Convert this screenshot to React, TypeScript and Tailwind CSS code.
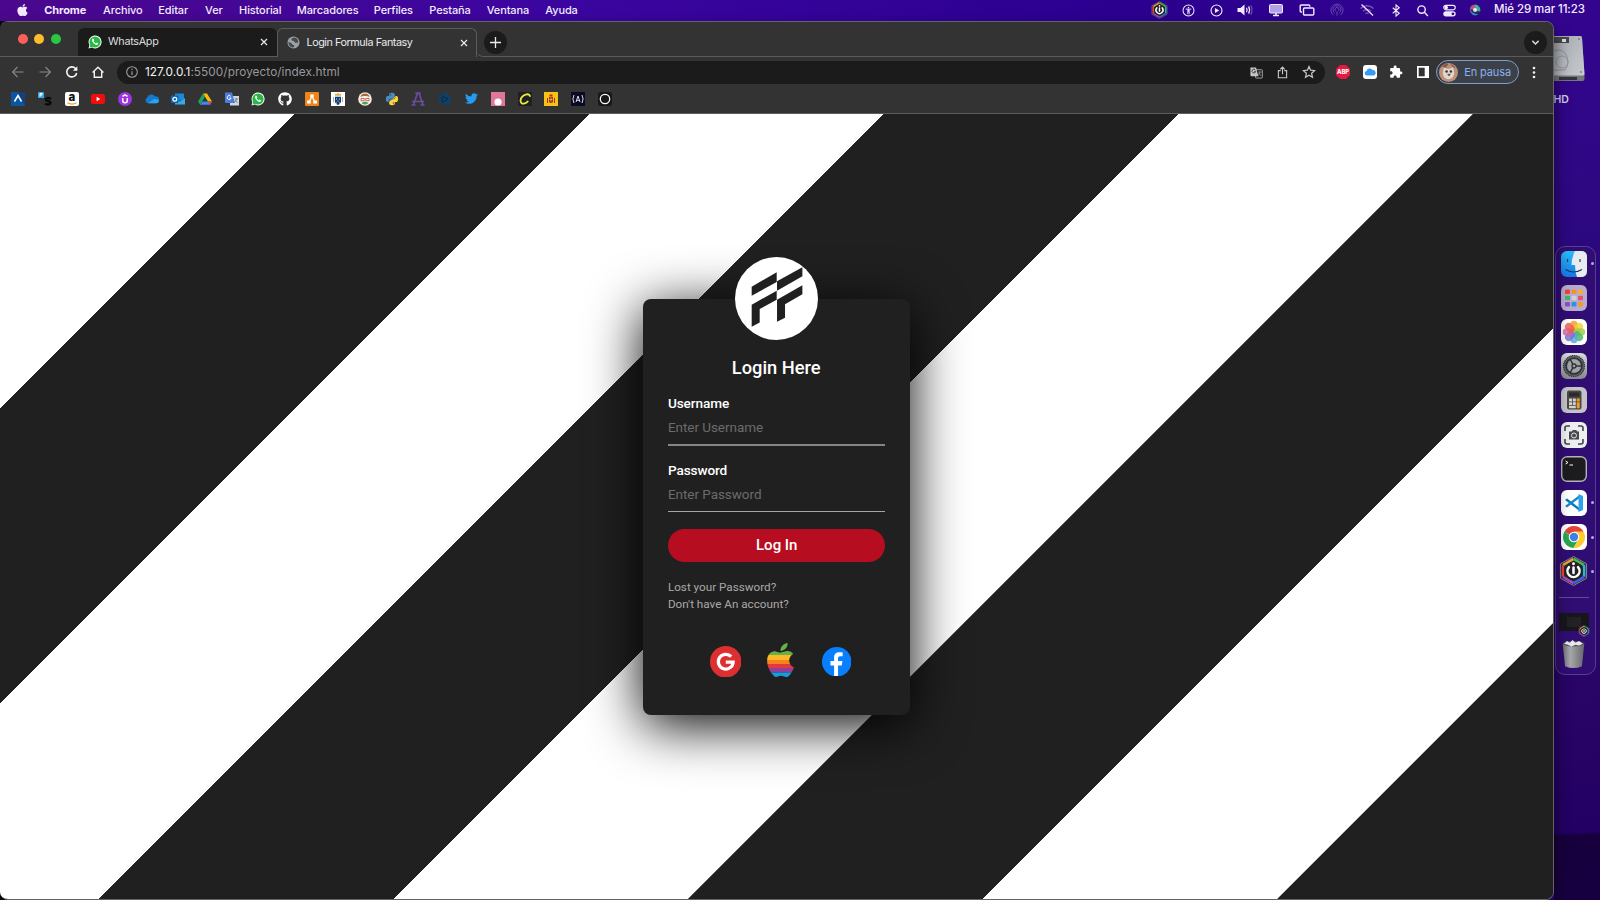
import React from "react";
import { FaApple, FaGithub, FaPython, FaTwitter } from "react-icons/fa";
import { MdExtension } from "react-icons/md";

const Gear = () => (
  <svg viewBox="0 0 26 26" className="h-[26px] w-[26px]">
    <defs>
      <linearGradient id="gearBg" x2="0" y2="1"><stop stopColor="#dadce0" /><stop offset="1" stopColor="#85878c" /></linearGradient>
    </defs>
    <rect width="26" height="26" rx="6" fill="url(#gearBg)" />
    <circle cx="13" cy="13" r="10.6" fill="#65686d" />
    <circle cx="13" cy="13" r="10.4" fill="none" stroke="#2c2e31" strokeWidth="1.4" strokeDasharray="1 .8" />
    <circle cx="13" cy="13" r="8" fill="none" stroke="#2f3135" strokeWidth="1.6" />
    <circle cx="13" cy="13" r="6.8" fill="#a0a4a9" />
    <circle cx="13" cy="13" r="2" fill="#a0a4a9" stroke="#303236" strokeWidth="1.3" />
    <path d="M15 13h6M12 11.3 9 6M12 14.7 9 20" stroke="#303236" strokeWidth="1.5" />
  </svg>
);

const Hex = ({ className }: { className: string }) => (
  <svg viewBox="0 0 30 32" className={className}>
    <path d="M15 1 28.5 8.5v15L15 31 1.500 23.500v-15z" fill="#28272b" stroke="#8c8996" strokeWidth="1" strokeLinejoin="round" />
    <path d="M4 10 15 3.500" stroke="#e9a03c" strokeWidth="2.600" />
    <path d="m15 3.500 11 6.500" stroke="#49b64e" strokeWidth="2.600" />
    <path d="M26 10v12" stroke="#2bb3d8" strokeWidth="2.600" />
    <path d="m26 22-11 6.500" stroke="#3c62dd" strokeWidth="2.600" />
    <path d="M15 28.500 4 22" stroke="#a746d0" strokeWidth="2.600" />
    <path d="M4 22V10" stroke="#e8433c" strokeWidth="2.600" />
    <circle cx="15" cy="16" r="9.600" fill="#232226" />
    <path d="M10.300 12a6.200 6.200 0 1 0 9.400 0M15 12.500v5.500" fill="none" stroke="#fff" strokeWidth="2.600" strokeLinecap="round" />
    <circle cx="15" cy="8.500" r="1.500" fill="#fff" />
  </svg>
);

const menus: [string, string][] = [
  ["Archivo", "w-[55.2px]"],
  ["Editar", "w-[46.8px]"],
  ["Ver", "w-[34px]"],
  ["Historial", "w-[57.700px]"],
  ["Marcadores", "w-[77px]"],
  ["Perfiles", "w-[55.500px]"],
  ["Pestaña", "w-[57.500px]"],
  ["Ventana", "w-[58.500px]"],
  ["Ayuda", "w-[40px]"],
];

const Cell = ({ w, children }: { w: string; children: React.ReactNode }) => (
  <div className={`flex shrink-0 items-center justify-center ${w}`}>{children}</div>
);

const MenuBar = () => (
  <div className="flex h-[21px] shrink-0 items-center pb-px text-[11px] font-medium tracking-[-0.12px] text-[#f3ecff]">
    <div className="w-[44.300px] pl-[15.500px]"><FaApple className="h-[14px] w-[13px]" /></div>
    <div className="w-[58.800px] font-bold">Chrome</div>
    {menus.map(([t, w]) => <div key={t} className={`shrink-0 whitespace-nowrap ${w}`}>{t}</div>)}
    <div className="ml-auto flex h-full items-center">
      <Cell w="w-[29px]"><Hex className="h-[18px] w-[17px]" /></Cell>
      <Cell w="w-[29px]">
        <svg viewBox="0 0 14 14" className="h-[13px] w-[13px]" fill="none" stroke="currentColor"><circle cx="7" cy="7" r="5.900" strokeWidth="1.100" /><circle cx="7" cy="3.800" r=".8" fill="currentColor" stroke="none" /><path d="M4 5.500h6M7 5.500v3M6.300 6v5M7.700 6v5" strokeWidth="1" /></svg>
      </Cell>
      <Cell w="w-[28px]">
        <svg viewBox="0 0 14 14" className="h-[13px] w-[13px]"><circle cx="7" cy="7" r="5.900" fill="none" stroke="currentColor" strokeWidth="1.200" /><path d="m5.300 4.200 4.700 2.800-4.700 2.800z" fill="currentColor" /></svg>
      </Cell>
      <Cell w="w-[30px]">
        <svg viewBox="0 0 17 14" className="h-[14px] w-[17px]" fill="none" stroke="currentColor"><path d="M.5 5h3l4-3.500v11L3.500 9h-3z" fill="currentColor" stroke="none" /><path d="M9.500 4.800q1.200 2.200 0 4.400M11.600 3.400q2 3.600 0 7.200" strokeWidth="1.200" /><path d="M13.700 2.200q2.700 4.800 0 9.600" strokeWidth="1.100" opacity=".35" /></svg>
      </Cell>
      <Cell w="w-[31.500px]">
        <svg viewBox="0 0 16 14" className="h-[14px] w-[16px]"><rect x="1.500" y="1.500" width="13" height="8.500" rx="1" fill="#b3a2e6" stroke="currentColor" /><path d="M5 12.500h6M8 10v2" stroke="currentColor" strokeWidth="1.500" /></svg>
      </Cell>
      <Cell w="w-[30px]">
        <svg viewBox="0 0 16 14" className="h-[14px] w-[16px]" fill="none" stroke="currentColor" strokeWidth="1.400"><path d="M3 9H2.200Q1.200 9 1.200 8V3Q1.200 2 2.200 2h7.600q1 0 1 1v.8" /><rect x="4.500" y="5" width="10.300" height="7" rx="1" /></svg>
      </Cell>
      <Cell w="w-[30px]">
        <svg viewBox="0 0 14 14" className="h-[14px] w-[14px] opacity-30" fill="none" stroke="currentColor"><path d="M3.500 12A6 6 0 1 1 10.500 12M4.600 9.800a3.900 3.900 0 1 1 4.800 0" /><path d="M5.700 7.800a1.900 1.900 0 1 1 2.600 0M7 8.500v4" /></svg>
      </Cell>
      <Cell w="w-[30px]">
        <svg viewBox="0 0 16 14" className="h-[14px] w-[16px]" fill="none" stroke="currentColor"><path d="M1.500 5.500a9 9 0 0 1 13 0M4 8.200a5.400 5.400 0 0 1 8 0M6.500 10.700a2.300 2.300 0 0 1 3 0" opacity=".35" strokeWidth="1.400" /><path d="m2.500 1.500 11.500 11" strokeWidth="1.200" /></svg>
      </Cell>
      <Cell w="w-[27px]">
        <svg viewBox="0 0 10 14" className="h-[13px] w-[10px]" fill="none" stroke="currentColor" strokeWidth="1.200"><path d="m1.500 4 7 6L5 13V1l3.500 3-7 6" /></svg>
      </Cell>
      <Cell w="w-[27px]">
        <svg viewBox="0 0 14 14" className="h-[13px] w-[13px]" fill="none" stroke="currentColor" strokeWidth="1.500"><circle cx="6" cy="6" r="4" /><path d="m9 9 3.800 3.800" /></svg>
      </Cell>
      <Cell w="w-[26px]">
        <svg viewBox="0 0 14 14" className="h-[13px] w-[13px]"><rect x=".8" y="1.500" width="12.400" height="4.800" rx="2.400" fill="none" stroke="currentColor" strokeWidth="1.200" /><circle cx="3.500" cy="3.900" r="1.900" fill="currentColor" /><rect x=".3" y="7.700" width="13.400" height="5.800" rx="2.900" fill="currentColor" /><circle cx="10.700" cy="10.600" r="1.500" fill="#34078f" /></svg>
      </Cell>
      <Cell w="w-[26px]">
        <svg viewBox="0 0 14 14" className="h-[12px] w-[12px]"><circle cx="7" cy="7" r="6.500" fill="#2c2b57" /><path d="M1 6a6.500 6.500 0 0 1 6-5.500Q10 3 7 7z" fill="#c34a8c" /><path d="M1 6q3 6 10 6A6.500 6.500 0 0 1 1 6" fill="#3d8be8" /><path d="M7 .5a6.500 6.500 0 0 1 6 8Q9 9 7 7z" fill="#3fae9d" /><circle cx="7" cy="7" r="2.300" fill="#fff" opacity=".85" /></svg>
      </Cell>
      <div className="w-[112px] whitespace-nowrap pl-[6px] text-[11.500px] tracking-[-0.08px]">Mié 29 mar 11:23</div>
    </div>
  </div>
);

const Close = () => (
  <svg viewBox="0 0 8 8" className="h-[8px] w-[8px]" stroke="#e8eaed" strokeWidth="1.200"><path d="m1 1 6 6M7 1 1 7" /></svg>
);

const WhatsAppIcon = () => (
  <svg viewBox="0 0 14 14" className="h-[14px] w-[14px]">
    <path d="M.5 13.500 1.400 10A6.500 6.500 0 1 1 4 12.600z" fill="#fff" />
    <circle cx="7" cy="7" r="5.600" fill="#27b946" /><path d="m1.600 12.400 1-3.500 2.400 2.500z" fill="#27b946" />
    <path d="M4.500 3.800q-1 1 0 2.900 1.500 2.400 3.600 3.200 1.700.3 2.200-1.400L8.800 7.600l-.9.800Q6.500 7.800 5.700 6.300l.6-.8-.7-1.700z" fill="#fff" />
  </svg>
);

const TabStrip = () => (
  <div className="flex h-[35px] shrink-0 items-stretch bg-[#333333]">
    <div className="flex w-[77.500px] items-center gap-[6.600px] border-b border-[#5a5c5b] pl-[17.500px]">
      <i className="h-[10px] w-[10px] rounded-full bg-[#ff5f57]" />
      <i className="h-[10px] w-[10px] rounded-full bg-[#febc2e]" />
      <i className="h-[10px] w-[10px] rounded-full bg-[#28c840]" />
    </div>
    <div className="mt-[6px] flex w-[199.500px] items-center rounded-t-[6px] border-b border-[#5a5c5b] bg-[#1b1b1b] pl-[10px] text-[10.800px] text-[#dcdedf]">
      <WhatsAppIcon />
      <span className="ml-[6.500px] pt-px tracking-[-0.3px]">WhatsApp</span>
      <span className="ml-auto mr-[9px]"><Close /></span>
    </div>
    <div className="mt-[6px] flex w-[200px] items-center rounded-t-[6px] border-x border-t border-[#5a5c5b] pb-px pl-[9px] text-[10.800px] text-[#e8eaed]">
      <svg viewBox="0 0 14 14" className="h-[13px] w-[13px]"><circle cx="7" cy="7" r="6.500" fill="#9aa0a6" /><path d="M7.500 1.500 4.500 3 5.500 5l2 .5L9 7.500l3-.5a5 5 0 0 0-3-5zM1.500 6.500l3 1 1.500 2L8 10l-1 2.500A5.500 5.500 0 0 1 1.500 6.500" fill="#46494d" /></svg>
      <span className="ml-[6.500px] whitespace-nowrap pt-px tracking-[-0.45px]">Login Formula Fantasy</span>
      <span className="ml-auto mr-[8.500px]"><Close /></span>
    </div>
    <div className="flex flex-1 items-center rounded-bl-[6px] border-b border-[#5a5c5b] pl-[6.500px] pr-[6px] pt-[7px]">
      <div className="flex h-[23px] w-[23px] items-center justify-center rounded-full bg-[#1b1b1b]">
        <svg viewBox="0 0 10 10" className="h-[11px] w-[11px]" stroke="#e8eaed" strokeWidth="1.200"><path d="M5 0v10M0 5h10" /></svg>
      </div>
      <div className="ml-auto flex h-[23px] w-[23px] items-center justify-center rounded-full bg-[#1b1b1b]">
        <svg viewBox="0 0 10 10" className="h-[9px] w-[9px]" fill="none" stroke="#d5d7d9" strokeWidth="1.600"><path d="m1.500 3.200 3.500 3.500 3.500-3.500" /></svg>
      </div>
    </div>
  </div>
);

const TranslateGray = () => (
  <svg viewBox="0 0 14 14" className="h-[13px] w-[13px]"><rect x="6" y="4" width="7.300" height="9" rx=".6" fill="none" stroke="#a4a6a8" /><path d="M.5 1.500h6L9 11H1.500q-1 0-1-1z" fill="#c3c5c7" /><path d="M5.800 4.300a2 2 0 1 0 .3 1.700H4.500" fill="none" stroke="#26282a" strokeWidth=".9" /><path d="M9 6.500h3.500M10.700 6v1q-.4 2-2 3M9.300 8q1.200 1.700 2.800 2.300" fill="none" stroke="#a4a6a8" strokeWidth=".8" /></svg>
);

const Toolbar = () => (
  <div className="flex h-[30px] shrink-0 items-center bg-[#333333] pl-[4.500px]">
    <Cell w="w-[27px]"><svg viewBox="0 0 12 12" className="h-[12px] w-[12px]" fill="none" stroke="#858789" strokeWidth="1.200"><path d="M11.500 6h-11M5.500 1l-5 5 5 5" /></svg></Cell>
    <Cell w="w-[27px]"><svg viewBox="0 0 12 12" className="h-[12px] w-[12px]" fill="none" stroke="#858789" strokeWidth="1.200"><path d="M.5 6h11M6.500 1l5 5-5 5" /></svg></Cell>
    <Cell w="w-[26.500px]"><svg viewBox="0 0 12 12" className="h-[12px] w-[12px]" fill="none" stroke="#f1f3f4" strokeWidth="1.600"><path d="M10.700 7A5 5 0 1 1 9.500 2.500L11 4" /><path d="M11.300.3v4.500H6.800z" fill="#f1f3f4" stroke="none" /></svg></Cell>
    <Cell w="w-[26.500px]"><svg viewBox="0 0 12 12" className="h-[12px] w-[12px]" fill="none" stroke="#f1f3f4" strokeWidth="1.400"><path d="M.6 6.500 6 1.300l5.400 5.200M2.300 5.500v5.700h7.400V5.500" /></svg></Cell>
    <div className="ml-[5.500px] flex h-[23px] w-[1207.500px] items-center rounded-full bg-[#1b1b1b] pl-[9px]">
      <svg viewBox="0 0 12 12" className="h-[12px] w-[12px]" fill="none" stroke="#9a9da0"><circle cx="6" cy="6" r="5.300" strokeWidth="1.100" /><path d="M6 5.200V9M6 2.800v1.300" strokeWidth="1.200" /></svg>
      <span className="ml-[7px] pt-px text-[11.800px] tracking-[0.060px] text-[#97999b]"><span className="text-[#f1f3f4]">127.0.0.1</span>:5500/proyecto/index.html</span>
      <div className="ml-auto mr-[2px] flex">
        <Cell w="w-[26.500px]"><TranslateGray /></Cell>
        <Cell w="w-[26.500px]"><svg viewBox="0 0 12 14" className="h-[13px] w-[11px]" fill="none" stroke="#c6c8ca" strokeWidth="1.200"><path d="M4 5H1.500v7.800h9V5H8M6 9V1.200M3.500 3.500 6 1l2.500 2.500" /></svg></Cell>
        <Cell w="w-[26.500px]"><svg viewBox="0 0 14 14" className="h-[14px] w-[14px]" fill="none" stroke="#c6c8ca" strokeWidth="1.200"><path d="m7 1.500 1.600 3.700 4 .4-3 2.700.9 4L7 10.200l-3.500 2.100.9-4-3-2.700 4-.4z" /></svg></Cell>
      </div>
    </div>
    <div className="flex pl-[5px]">
      <Cell w="w-[26.700px]">
        <svg viewBox="0 0 14 14" className="h-[14px] w-[14px]"><path d="M4 0h6l4 4v6l-4 4H4l-4-4V4z" fill="#e6193f" /><text x="7" y="9" textAnchor="middle" fontSize="5.800" fontWeight="800" fill="#fff" fontFamily="Inter, sans-serif">ABP</text></svg>
      </Cell>
      <Cell w="w-[26.700px]">
        <svg viewBox="0 0 14 14" className="h-[14px] w-[14px]"><rect width="14" height="14" rx="3" fill="#fff" /><path d="M3.500 10.500a2.300 2.300 0 0 1 0-4.500 3.300 3.300 0 0 1 6-1 2.800 2.800 0 0 1 1 5.500z" fill="#369bf4" /></svg>
      </Cell>
      <Cell w="w-[26.700px]"><MdExtension className="h-[14px] w-[14px] text-white" /></Cell>
      <Cell w="w-[26.700px]"><svg viewBox="0 0 12 12" className="h-[12px] w-[12px]"><rect width="12" height="12" fill="#fff" /><rect x="1.700" y="1.700" width="6" height="8.600" fill="#333" /></svg></Cell>
    </div>
    <div className="flex h-[23.500px] w-[83px] shrink-0 items-center rounded-full border border-[#7d9fcd] bg-[#3c4048] pl-[1.500px] text-[11px] text-[#8ab0f0]">
      <svg viewBox="0 0 20 20" className="h-[19px] w-[19px]"><circle cx="10" cy="10" r="10" fill="#c09176" /><path d="m5 4 3 2h4l3-2 1 7q-1 6-6 6t-6-6z" fill="#ded8d0" /><circle cx="8" cy="9" r="1.300" fill="#37322f" /><circle cx="12.500" cy="9" r="1.300" fill="#37322f" /><path d="m8.500 12 2-1 2 1-2 2z" fill="#6f5148" /><path d="M3 4q3-4 7-3l-3 4zM12 1q4 1 5 5l-3-2z" fill="#805a48" /></svg>
      <span className="ml-[6.500px] whitespace-nowrap pt-px tracking-[-0.12px]">En pausa</span>
    </div>
    <svg viewBox="0 0 4 14" className="ml-[13px] h-[13px] w-[4px]" fill="#f1f3f4"><circle cx="2" cy="2.200" r="1.400" /><circle cx="2" cy="7" r="1.400" /><circle cx="2" cy="11.800" r="1.400" /></svg>
  </div>
);

const Svg = ({ children }: { children: React.ReactNode }) => <svg viewBox="0 0 14 14" className="h-[14px] w-[14px] overflow-visible">{children}</svg>;

const bookmarks: React.ReactNode[] = [
  <Svg><path d="M0 0h14v14H0z" fill="#0b559f" /><path d="M7 0h7v14z" fill="#15407d" /><path d="m3.500 9.500 3.500-6 3.500 6" fill="none" stroke="#fff" strokeWidth="1.600" /></Svg>,
  <Svg><rect width="6" height="6" rx=".5" fill="#3ba4e3" /><path d="M2 4.800V1.500h2v1.500H2" fill="none" stroke="#fff" /><path d="M13 6.700q-5-1.800-5.200.8c0 2.500 4.900.8 4.700 3.300-.2 2-4 2-5.500.8" fill="none" stroke="#080808" strokeWidth="2.200" /></Svg>,
  <Svg><rect width="14" height="14" rx="2" fill="#fff" /><text x="7" y="9.300" textAnchor="middle" fontSize="11.500" fontWeight="800" fill="#111" fontFamily="Inter, sans-serif">a</text><path d="M2.500 10.800q4.500 2.600 9 0" fill="none" stroke="#f49a1c" strokeWidth="1.200" /></Svg>,
  <Svg><rect y="2" width="14" height="10" rx="2.500" fill="#f40c0c" /><path d="m5.600 4.800 3.800 2.200-3.800 2.200z" fill="#fff" /></Svg>,
  <Svg><circle cx="7" cy="7" r="7" fill="#a033e0" /><path d="M4.700 6v2.500q0 2.300 2.300 2.300t2.300-2.300V6M4.500 4.400 7 2.800l2.500 1.600" fill="none" stroke="#fff" strokeWidth="1.500" /></Svg>,
  <Svg><path d="M3 11.200a3 3 0 0 1-.8-5.600A4.300 4.300 0 0 1 10 4.500a3.400 3.400 0 0 1 1.500 6.700z" fill="#1479cf" /><path d="M3 11.200 9 7q4.500 0 5 2-.4 2.200-2.500 2.200z" fill="#28a8ea" /></Svg>,
  <Svg><path d="M4 1.500h9v7H4z" fill="#1b88d8" /><path d="M4 6l5 3.500L14 6v6.500H4z" fill="#39a9e9" /><rect y="3.500" width="7.500" height="7.500" rx=".7" fill="#0b68b7" /><circle cx="3.800" cy="7.200" r="1.900" fill="none" stroke="#fff" strokeWidth="1.200" /></Svg>,
  <Svg><path d="M5 1.500h4l5 8h-4z" fill="#fbbc04" /><path d="m5 1.500 2 3.300-5 8-2-3.300z" fill="#1da462" /><path d="M4.500 9.500H14l-2 3.300H2z" fill="#4285f4" /><path d="M10 9.500h4l-2 3.300z" fill="#ea4335" /></Svg>,
  <Svg><rect x="5" y="4" width="9" height="9.500" fill="#d4d7da" /><path d="M0 .5h7L10 11H1q-1 0-1-1z" fill="#4a7ddd" /><path d="M5.600 4.200a2 2 0 1 0 .5 1.800H4.400" fill="none" stroke="#fff" /><path d="M9.700 7h3.500M11.500 6v1q-.5 2-1.800 3M10 8l2.800 3" fill="none" stroke="#6c7782" strokeWidth=".8" /></Svg>,
  <WhatsAppIcon />,
  <FaGithub className="h-[14px] w-[14px] text-white" />,
  <Svg><rect width="14" height="14" rx="1" fill="#ef8518" /><path d="M7 4.500 4 10m3-5.500 3 5.500" stroke="#fff" strokeWidth="1.300" /><path d="M5.200 2.500h3.600v2.800H5.200zM2 8.500h3.700v3H2zM8.300 8.500H12v3H8.300z" fill="#fff" /></Svg>,
  <Svg><path d="M0 0h14v14H0z" fill="#fff" /><path d="M4 4.800h6V10q-1 2.500-3 3-2-.5-3-3z" fill="#153d75" /><path d="M4.300 3.800 3.500 1.500l2 .7L7 .7l1.500 1.500 2-.7-.8 2.300z" fill="#e4aa4a" /><path d="M5 7h1M8 7h1M6.500 9h1M5 11h1M8 11h1" stroke="#dfe6ef" /><path d="M2.500 5v5M11.500 5v5" stroke="#a8aaa6" /></Svg>,
  <Svg><circle cx="7" cy="7" r="6.800" fill="#f4ede4" /><path d="M2.500 5Q3 1.500 7 1.500T11.500 5l-2.500-1h-4z" fill="#a66b39" /><path d="M3 6.500h3.200v2.200H3zM7.800 6.500H11v2.200H7.800z" fill="#fff" stroke="#ba4432" strokeWidth=".8" /><path d="M3.500 11q3.500-2.500 7 0-3.500 3-7 0" fill="#46a25d" /></Svg>,
  <div className="h-[14px] w-[14px]">
    <svg className="absolute h-0 w-0"><defs><linearGradient id="py" x1="0" y1="0" x2="1" y2="1"><stop offset=".5" stopColor="#4b8bbe" /><stop offset=".5" stopColor="#ffd43b" /></linearGradient></defs></svg>
    <FaPython className="h-[14px] w-[14px]" fill="url(#py)" />
  </div>,
  <Svg><path d="M4.300 1h5.400M8 1l4 12M6.500 1 2.500 13M1 9.500h12M.5 13h4M9.500 13h4" fill="none" stroke="#6a4d9e" strokeWidth="1.700" /></Svg>,
  <Svg><path d="m7 .5 6 3.300v6.400L7 13.500 1 10.200V3.800z" fill="#123f63" /><path d="m4 4 6 3-6 3.500M4 5v5" fill="none" stroke="#082943" /></Svg>,
  <FaTwitter className="h-[13px] w-[13px] text-[#259cf0]" />,
  <Svg><path d="M0 0h14v14H0z" fill="#df7896" /><circle cx="7" cy="10" r="3.600" fill="#fff" /></Svg>,
  <Svg><path d="M0 0h14v14H0z" fill="#20211c" /><path d="M12 4.800Q12 2 8.500 2.300 3 3.500 2.500 8.500q.2 3.500 3.500 3.200 2.500-.5 4.200-2.700" fill="none" stroke="#ece94c" strokeWidth="1.800" /></Svg>,
  <Svg><path d="M0 0h14v14H0z" fill="#f4c313" /><path d="M5 5h4v5q-2 2-4 0zM5.500 2.500h3L8.500 4.500h-3zM3 6h1v5H3zM10 6h1v5h-1z" fill="#a92d20" /><path d="M5.500 7.500h3M7 5.500v4" stroke="#e6c78a" strokeWidth=".7" /></Svg>,
  <Svg><path d="M0 0h14v14H0z" fill="#0a0a23" /><path d="M3 3Q.8 7 3 11M11 3q2.200 4 0 8M5 10l2-6 2 6M5.800 8.300h2.400" fill="none" stroke="#d9d9ea" strokeWidth="1" /></Svg>,
  <Svg><rect width="14" height="14" rx="3" fill="#171717" /><circle cx="7" cy="7" r="4.700" fill="none" stroke="#fff" strokeWidth="1.300" /></Svg>,
];

const BookmarksBar = () => (
  <div className="flex h-[27px] shrink-0 items-center border-b border-[#5c5d5d] bg-[#333333] pb-[3px] pl-[5px]">
    {bookmarks.map((b, i) => <Cell key={i} w="w-[26.670px]">{b}</Cell>)}
  </div>
);

const Field = ({ label, hint, type, line }: { label: string; hint: string; type: string; line: string }) => (
  <label className="block">
    <span className="block h-[17px] text-[13.600px] font-medium leading-[17px] tracking-[-0.1px] text-white">{label}</span>
    <input type={type} placeholder={hint} className={`block w-full bg-transparent pb-[2px] text-[13.500px] tracking-[-0.05px] text-white outline-none placeholder:text-[#6b6b6b] ${line}`} />
  </label>
);

const LoginCard = () => (
  <div className="relative mt-px flex h-[416.500px] w-[266.700px] flex-col rounded-[8px] bg-[#202020] px-[25px] pt-[59.500px] font-['Roboto',sans-serif] shadow-[0_10px_54px_#000]">
    <div className="absolute left-[91.700px] top-[-41.700px] h-[83.400px] w-[83.400px] rounded-full bg-white">
      <svg viewBox="0 0 250 250" className="h-full w-full" fill="#202020">
        <path d="M50 89 125 46v29L50 116zM126 73l76-42v27l-76 43zM50 143l75-42v27l-51 28v40l-24 13zM126 128l76-43v27l-52 30v40l-24 12z" />
      </svg>
    </div>
    <h1 className="h-[20px] text-center text-[18.300px] font-medium leading-[20px] text-white">Login Here</h1>
    <div className="mt-[17px] flex flex-col gap-[15.500px]">
      <Field label="Username" hint="Enter Username" type="text" line="h-[34px] border-b-2 border-[#858585]" />
      <Field label="Password" hint="Enter Password" type="password" line="h-[33.500px] border-b border-[#a5a5a5]" />
    </div>
    <button className="mt-[16.500px] h-[33.500px] shrink-0 rounded-full bg-[#b60d20] pl-px text-[15px] font-medium text-white">Log In</button>
    <div className="mt-[16.500px] flex flex-col text-[11.700px] leading-[17px] text-[#a9a9a9]">
      <a>Lost your Password?</a>
      <a>Don't have An account?</a>
    </div>
    <div className="mt-[29px] flex h-[36px] items-center pl-[42px]">
      <svg viewBox="0 0 32 32" className="mt-[3px] h-[31.500px] w-[31.500px]"><circle cx="16" cy="16" r="16" fill="#dc2f30" /><path d="M21.500 10.800A7.500 7.500 0 1 0 23.500 16.300H16" fill="none" stroke="#fff" strokeWidth="3.300" /></svg>
      <svg viewBox="0 0 27 34" className="ml-[26px] h-[34px] w-[27px]">
        <defs><clipPath id="apple"><path d="M14 9.500c2-.2 4-1.500 6.500-1.400 2.500 0 4.500 1.200 5.700 3-6 3.500-5 11 .8 13.400-1.200 3.500-3.500 7-5.700 9-1.500 1-3 .4-4.300-.1-2-.9-4-.8-6 .2-1.500.6-2.600.7-4-.6C.8 27.500-1.700 17.500 1.500 12 3.500 8.600 6.500 7.700 9 8.400c2 .6 3.600 1.300 5 1.100" /></clipPath></defs>
        <path d="M13.500 8C13 3.500 17 .5 20.500 0c.5 4-2.500 7.500-7 8" fill="#63b147" />
        <g clipPath="url(#apple)"><path d="M0 7h27v5H0z" fill="#63b147" /><path d="M0 12h27v5H0z" fill="#fdb827" /><path d="M0 17h27v4H0z" fill="#f5821f" /><path d="M0 21h27v4H0z" fill="#e03a3e" /><path d="M0 25h27v4.500H0z" fill="#963d97" /><path d="M0 29.500h27V34H0z" fill="#139ddb" /></g>
      </svg>
      <svg viewBox="0 0 30 30" className="ml-[27.500px] mt-[3px] h-[29.500px] w-[29.500px]"><circle cx="15" cy="15" r="15" fill="#087fff" /><path d="M12.300 29.700V18.700H8.600V14.200h3.700v-3.600c0-3.600 2.300-5.200 5.200-5.200 1.500 0 2.600.1 3.500.3V9.500h-2.300c-1.800 0-2.400.9-2.400 2.200v2.500h4.500l-.8 4.500h-3.700v11z" fill="#fff" /></svg>
    </div>
  </div>
);

const petals = ["#f49b2c", "#f4d22e", "#9bcc43", "#47b86b", "#53a8dd", "#7d6fc9", "#cf64aa", "#ef5b4c"];
const tiles = ["#ed4338", "#f5922b", "#f4ad35", "#47b55a", "#d0d0da", "#ea5068", "#914fc2", "#3390e3", "#f39b24"];
const D = ({ children }: { children: React.ReactNode }) => <svg viewBox="0 0 26 26" className="h-[26px] w-[26px]">{children}</svg>;

const dockIcons: { icon: React.ReactNode; dot?: boolean }[] = [
  { dot: true, icon: <D><defs><linearGradient id="fd" x2="0" y2="1"><stop stopColor="#29bdf9" /><stop offset="1" stopColor="#1479e8" /></linearGradient></defs><rect width="26" height="26" rx="6" fill="url(#fd)" /><path d="M14 0q-3.500 7-3.500 14H14q0 7 2 12h4q6 0 6-6V6q0-6-6-6z" fill="#e8ecf1" /><path d="M6.500 8v3M19 8v3M4.500 18.500q8 5 16.500 0" fill="none" stroke="#243954" strokeWidth="1.200" /></D> },
  { icon: <D><rect width="26" height="26" rx="6" fill="#b6acd2" />{tiles.map((c, i) => <rect key={i} x={4 + (i % 3) * 6.500} y={4.500 + Math.floor(i / 3) * 6.300} width="5" height="4.500" rx="1" fill={c} />)}</D> },
  { icon: <D><rect width="26" height="26" rx="6" fill="#fff" />{petals.map((c, i) => <rect key={i} x="9.300" y="1.800" width="7.400" height="10.800" rx="3.700" fill={c} opacity=".82" transform={`rotate(${i * 45} 13 13)`} />)}</D> },
  { icon: <Gear /> },
  { icon: <D><rect width="26" height="26" rx="6" fill="#c4c4c8" /><rect x="6" y="3.500" width="14.500" height="19" rx="2" fill="#4b4845" /><rect x="8" y="5.500" width="10.500" height="4" fill="#2c2b2a" /><path d="M8 11.500h3v3H8zM11.800 11.500h3v3h-3zM8 15.300h3v3H8zM11.800 15.300h3v3h-3zM8 19h6.800v2.300H8z" fill="#d4d3d0" /><path d="M15.700 11.500h3v3h-3zM15.700 15.300h3v6h-3z" fill="#f39c25" /></D> },
  { icon: <D><rect width="26" height="26" rx="6" fill="#eceef0" /><path d="M4 9V6q0-2 2-2h3M17 4h3q2 0 2 2v3M22 17v3q0 2-2 2h-3M9 22H6q-2 0-2-2v-3" fill="none" stroke="#404448" strokeWidth="1.600" /><path d="M8 9.500h2.500L12 8h3l1.500 1.500H18v8H8z" fill="#484c50" /><circle cx="13" cy="13.500" r="2.500" fill="#484c50" stroke="#dfe2e5" /></D> },
  { icon: <D><rect x=".7" y=".7" width="24.600" height="24.600" rx="5.500" fill="#1c1c1e" stroke="#b5b5b8" strokeWidth="1.400" /><path d="m4.500 5 2.500 1.500L4.500 8M8.500 9h3.500" fill="none" stroke="#fff" /></D> },
  { dot: true, icon: <D><rect width="26" height="26" rx="6" fill="#fff" /><path d="m4 10 2-1.500L18.500 18v3z" fill="#0877bb" /><path d="m4 16 2 1.500L18.500 8V5z" fill="#1687cf" /><path d="M17.500 4 22 6v14l-4.500 2z" fill="#2ca3ed" /></D> },
  { dot: true, icon: <D><rect width="26" height="26" rx="6" fill="#fff" /><path d="M13 13 3.500 7.500A11 11 0 0 1 22.500 7.500z" fill="#e44336" /><path d="M13 13h-1L3.500 7.500A11 11 0 0 0 12.500 24l5-8.500z" fill="#29a650" /><path d="M13 7.500h9.500A11 11 0 0 1 12.500 24l5-8.500z" fill="#fccb2d" /><circle cx="13" cy="13" r="5.300" fill="#fff" /><circle cx="13" cy="13" r="4.200" fill="#427ee9" /></D> },
  { dot: true, icon: <Hex className="h-[32px] w-[29px]" /> },
];

const Dock = () => (
  <div className="ml-px mt-[138.500px] flex h-[429.500px] w-[41px] shrink-0 flex-col items-center rounded-[10px] border border-[#57408a] bg-[#300d72] pr-[3px]">
    {dockIcons.map((d, i) => (
      <div key={i} className="relative flex h-[34.200px] w-full shrink-0 items-center justify-center">
        {d.icon}
        {d.dot && <i className="absolute right-[-2px] top-[15.500px] h-[3px] w-[3px] rounded-full bg-[#bda3ee]" />}
      </div>
    ))}
    <div className="mt-[9px] h-px w-[30px] shrink-0 bg-[#654c96]" />
    <div className="relative mt-[15px] h-[18px] w-[30px] shrink-0 bg-[#17161b]">
      <div className="mx-auto mt-[4px] h-[10px] w-[14px] bg-[#222126]" />
      <Hex className="absolute bottom-[-6px] right-[-1px] h-[12px] w-[12px]" />
    </div>
    <svg viewBox="0 0 26 32" className="mt-[8px] h-[30px] w-[25px] shrink-0">
      <defs><linearGradient id="bin"><stop stopColor="#707277" /><stop offset=".35" stopColor="#a6a8ab" /><stop offset="1" stopColor="#66676c" /></linearGradient></defs>
      <path d="M1.500 5h23L22 29q-9 4-18 0z" fill="url(#bin)" />
      <ellipse cx="13" cy="5" rx="11.500" ry="3" fill="#55575b" />
      <path d="m3 5 3-3 3 2 3-3 3 3 4-2 4 3-4 2-4-1-4 2-4-2z" fill="#e8e9eb" />
    </svg>
  </div>
);

const Desktop = () => (
  <div className="flex min-w-0 flex-1 flex-col bg-[linear-gradient(178deg,#33058f_0%,#2c087f_25%,#2a0668_70%,#230063_92.200%,#17003d_92.600%,#170040_100%)]">
    <svg viewBox="0 0 31 48" className="mt-[12.500px] h-[50px] w-[31px] shrink-0">
      <defs><linearGradient id="hd" x2="1" y2="1"><stop stopColor="#a4a7ad" /><stop offset="1" stopColor="#c7cacf" /></linearGradient></defs>
      <path d="M0 1h26q2 0 2 2l2.500 37v4q0 2-2 2H0z" fill="#75777c" />
      <path d="M0 1h26q2 0 2 2l2.500 36q0 1.500-2 1.500H0z" fill="url(#hd)" />
      <path d="M0 2h15v6H0z" fill="#46474c" /><path d="M8 7V4h4v3" fill="#dfe0e2" />
      <path d="M0 16q6-3 11 2 6 9 0 17H0" fill="none" stroke="#8c9097" /><circle cx="8" cy="27" r="6" fill="none" stroke="#9397a0" />
      <path d="M5 42h18v3H5z" fill="#35363a" /><circle cx="25" cy="4" r=".8" fill="#555" /><circle cx="27" cy="37" r=".8" fill="#555" />
    </svg>
    <span className="mt-[9.500px] h-[14px] text-[10.500px] font-semibold leading-[14px] text-[#d5cbee]">HD</span>
    <Dock />
  </div>
);

export default function App() {
  return (
    <div className="flex h-[900px] w-[1600px] flex-col overflow-hidden bg-[linear-gradient(90deg,#4b088e_0%,#3b05a0_35%,#2b008f_70%,#33058f_100%)] font-['Inter',sans-serif]">
      <MenuBar />
      <div className="flex min-h-0 flex-1 bg-[linear-gradient(90deg,#0d0018_0%,#0d0018_50%,#33058f_100%)]">
        <div className="relative z-10 flex w-[1553.500px] shrink-0 flex-col overflow-hidden rounded-[8px] border border-l-0 border-[#646464] shadow-[0_8px_16px_rgba(0,0,0,0.6)]">
          <TabStrip />
          <Toolbar />
          <BookmarksBar />
          <main className="flex flex-1 items-center justify-center bg-[repeating-linear-gradient(135deg,#fff_0px,#fff_208.100px,#202020_208.500px,#202020_416.600px)]">
            <LoginCard />
          </main>
        </div>
        <Desktop />
      </div>
    </div>
  );
}
